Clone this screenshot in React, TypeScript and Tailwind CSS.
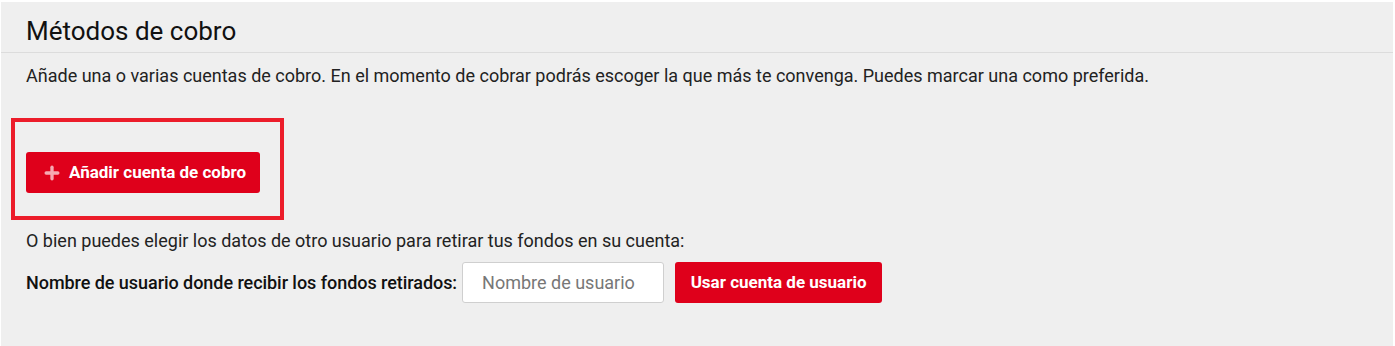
import { Plus } from "lucide-react";

const font = { fontFamily: "Roboto, 'Liberation Sans', sans-serif" };

export default function App() {
  return (
    <div className="w-full h-[346px] bg-white pt-[2px] pl-[1px] pr-[2px]" style={font}>
      <div className="h-full bg-[#efefef]">
        <div className="h-[51px] border-b border-[#dcdcdc] px-[25px] pt-[14px]">
          <h1 className="text-[26px] leading-[30px] text-[#111]">Métodos de cobro</h1>
        </div>
        <div className="px-[25px]">
          <p className="mt-[12px] text-[18px] leading-[22px] text-[#222]">
            Añade una o varias cuentas de cobro. En el momento de cobrar podrás escoger la que más te convenga. Puedes marcar una como preferida.
          </p>

          <div className="mt-[31px] -ml-[15px] w-[273px] border-[4px] border-[#ec1c2a] pl-[11px] pt-[30px] pb-[23px]">
            <button className="flex items-center h-[41px] w-[234px] rounded-[3px] bg-[#df001b] pl-[16px] text-white text-[17px] font-bold">
              <Plus size={20} strokeWidth={4} className="text-[#f6a9b3] mr-[7px]" />
              Añadir cuenta de cobro
            </button>
          </div>

          <p className="mt-[10px] text-[18px] leading-[22px] text-[#222]">
            O bien puedes elegir los datos de otro usuario para retirar tus fondos en su cuenta:
          </p>

          <div className="mt-[10px] flex items-center">
            <span className="text-[18px] font-medium text-[#111] tracking-[-0.05px]">
              Nombre de usuario donde recibir los fondos retirados:
            </span>
            <input
              placeholder="Nombre de usuario"
              className="ml-[5px] h-[41px] w-[202px] rounded-[3px] border border-[#cfcfcf] bg-white px-[19px] text-[18px] text-[#333] placeholder:text-[#777] outline-none"
            />
            <button className="ml-[11px] h-[41px] w-[207px] rounded-[3px] bg-[#df001b] text-white text-[17px] font-bold">
              Usar cuenta de usuario
            </button>
          </div>
        </div>
      </div>
    </div>
  );
}
